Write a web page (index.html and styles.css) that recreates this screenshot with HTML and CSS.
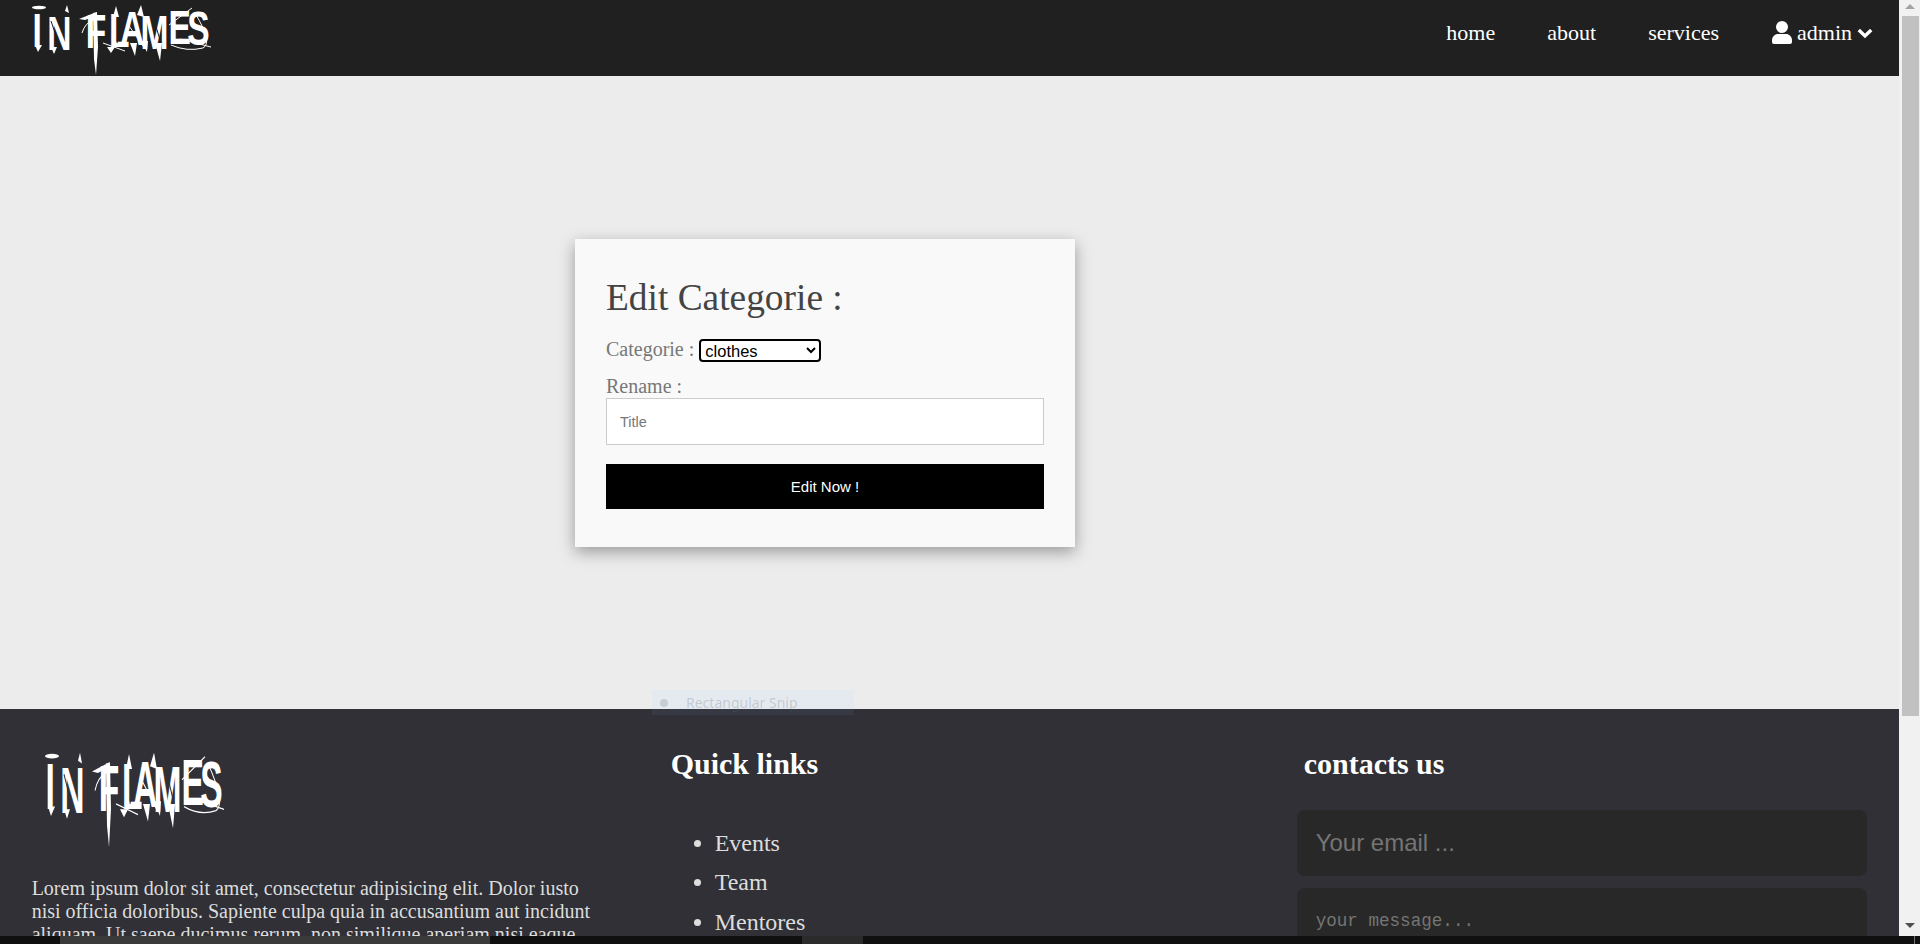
FILE: index.html
```html
<!DOCTYPE html>
<html lang="en">
<head>
<meta charset="utf-8">
<title>Edit Categorie</title>
<link rel="stylesheet" href="styles.css">
</head>
<body>
<svg class="defs" aria-hidden="true">
  <symbol id="flames" viewBox="0 -3 185 75" preserveAspectRatio="none" overflow="visible">
    <g transform="scale(0.7 1)">
      <text class="logo-text" x="8 29 58 84 117 133 162 202 229" y="44 47 46 45 44 42 46 41 42">IN FLAMES</text>
    </g>
    <g class="logo-spikes">
      <ellipse cx="12" cy="4.500" rx="7" ry="1.800"/>
      <polygon points="66,10 70,9 71,44 69,72 67,56"/>
      <polygon points="86,14 89,3 92,14"/>
      <polygon points="110,12 114,2 117,14"/>
      <polygon points="128,40 133,58 135,40"/>
      <polygon points="103,40 108,53 110,40"/>
      <polygon points="114,38 120,49 121,38"/>
      <polygon points="24,44 27,51 30,44"/>
      <polygon points="8,42 11,49 15,42"/>
      <polygon points="38,8 40,2 42,10"/>
      <polygon points="52,16 67,10 68,13 58,17"/>
      <polygon points="80,44 84,50 88,44"/>
    </g>
    <g class="logo-lines">
      <path d="M66 17 Q 58 20 55 30"/>
      <path d="M168 10 Q 186 40 176 45 Q 160 49 144 42"/>
      <path d="M142 22 L 165 5"/>
      <path d="M153 36 L 184 44"/>
      <path d="M76 40 L 98 48"/>
      <path d="M100 20 L 118 46"/>
    </g>
    <g class="logo-cuts">
      <path d="M24 18 L 30 36"/>
      <path d="M96 12 L 90 40"/>
      <path d="M126 14 L 134 40"/>
      <path d="M150 18 L 156 20"/>
      <path d="M150 32 L 157 32"/>
    </g>
  </symbol>
</svg>
<div class="window">
  <div class="page">
    <header class="topbar">
      <a class="logo-link" href="#" aria-label="In Flames"><svg class="logo logo-top"><use href="#flames"/></svg></a>
      <nav class="nav">
        <a href="#">home</a>
        <a href="#">about</a>
        <a href="#">services</a>
        <a class="user" href="#">
          <svg class="user-icon" viewBox="0 0 20 23"><circle cx="10" cy="6" r="6"/><path d="M0 19.5C0 15.5 3 13 6 13h8c3 0 6 2.500 6 6.500V21a2 2 0 0 1-2 2H2a2 2 0 0 1-2-2z"/></svg>
          <span>admin</span>
          <svg class="chev" viewBox="0 0 16 11"><path d="M1.800 2l6.200 6 6.200-6"/></svg>
        </a>
      </nav>
    </header>
    <main class="main">
      <form class="card">
        <h1>Edit Categorie :</h1>
        <div class="row">
          <label for="cat">Categorie :</label>
          <select id="cat" class="select"><option>clothes</option></select>
        </div>
        <label class="rename" for="title">Rename :</label>
        <input id="title" class="text" type="text" placeholder="Title">
        <button class="btn" type="button">Edit Now !</button>
      </form>
    </main>
    <footer class="footer">
      <section class="col">
        <svg class="logo logo-foot"><use href="#flames"/></svg>
        <p class="lorem">Lorem ipsum dolor sit amet, consectetur adipisicing elit. Dolor iusto nisi officia doloribus. Sapiente culpa quia in accusantium aut incidunt aliquam. Ut saepe ducimus rerum, non similique aperiam nisi eaque.</p>
      </section>
      <section class="col">
        <h3>Quick links</h3>
        <ul class="links">
          <li>Events</li>
          <li>Team</li>
          <li>Mentores</li>
        </ul>
      </section>
      <section class="col col-contact">
        <h3>contacts us</h3>
        <input class="dark-input" type="email" placeholder="Your email ...">
        <textarea class="dark-area" placeholder="your message..."></textarea>
      </section>
    </footer>
  </div>
  <div class="scrollbar">
    <span class="arrow arrow-up"></span>
    <span class="thumb"></span>
    <span class="arrow arrow-down"></span>
  </div>
</div>
<div class="snip"><i class="snip-dot"></i><span>Rectangular Snip</span></div>
<div class="taskbar"><i class="task task-a"></i><i class="task task-b"></i><i class="task-line"></i></div>
</body>
</html>
```
FILE: styles.css
```css
* { box-sizing: border-box; }
html, body { margin: 0; height: 944px; overflow: hidden; }
body { font-family: "Liberation Serif", "Times New Roman", serif; background: #ececec; position: relative; }
a { color: inherit; text-decoration: none; }
.defs { width: 0; height: 0; display: block; }

.window { display: flex; height: 936px; overflow: hidden; }
.page { width: 1899px; flex: none; display: flex; flex-direction: column; height: 936px; overflow: hidden; }

.topbar { --logo-bg: #202020; height: 76px; flex: none; background: #202020; display: flex; justify-content: space-between; align-items: flex-start; padding: 0 26px 0 27px; }
.logo { display: block; color: #fff; overflow: visible; }
.logo-top { width: 185px; height: 75px; }
.logo-text { font-family: "Liberation Sans", Arial, sans-serif; font-weight: 700; font-size: 48px; fill: #fff; }
.logo-spikes { fill: #fff; }
.logo-lines { fill: none; stroke: #fff; stroke-width: 1; }
.logo-cuts { fill: none; stroke: var(--logo-bg); stroke-width: 1; }
.nav { display: flex; align-items: center; gap: 52px; height: 66px; color: #fff; font-size: 22px; }
.user { display: flex; align-items: center; gap: 5px; margin-left: 1px; }
.user-icon { width: 20px; height: 23px; fill: #fff; margin-bottom: 2px; }
.chev { width: 16px; height: 11px; fill: none; stroke: #fff; stroke-width: 3.4; }

.main { height: 633px; flex: none; display: flex; align-items: center; padding-left: 575px; }
.card { width: 500px; height: 308px; background: #f9f9f9; padding: 0 31px; box-shadow: 0 5px 15px rgba(0, 0, 0, .35); display: flex; flex-direction: column; }
.card h1 { margin: 38px 0 0; font-size: 37.4px; font-weight: 400; line-height: 42px; color: #444; }
.row { display: flex; align-items: center; gap: 5px; margin-top: 20px; height: 23px; }
.row label { font-size: 20px; color: #777; line-height: 23px; margin-top: -2px; }
.rename { font-size: 20px; color: #777; line-height: 23px; }
.select { width: 122px; height: 23px; border: 2px solid #000; border-radius: 4px; background: #fff; color: #000; font-family: "Liberation Sans", Arial, sans-serif; font-size: 16.5px; padding: 0; }
.rename { margin-top: 13px; display: block; }
.text { width: 100%; height: 47px; margin-top: 0; border: 1px solid #ccc; background: #fff; padding: 1px 13px 0; font-family: "Liberation Sans", Arial, sans-serif; font-size: 14.5px; flex: none; }
.text::placeholder { color: #777; }
.btn { height: 45px; flex: none; margin-top: 19px; width: 100%; border: 0; background: #000; color: #fff; font-family: "Liberation Sans", Arial, sans-serif; font-size: 15px; padding: 0; }

.footer { --logo-bg: #303036; flex: none; height: 400px; background: #303036; display: grid; grid-template-columns: repeat(3, 633px); color: #ddd; }
.col { padding: 0 31.65px; }
.col-contact { padding: 0 32px 0 31px; }
.logo-foot { width: 185px; height: 101px; margin: 37px 0 0 8px; }
.lorem { margin: 30px 0 0; font-size: 20px; line-height: 23px; color: #ddd; }
.col h3 { margin: 37px 0 0; padding-left: 6px; font-size: 30px; font-weight: 700; line-height: 36px; color: #fff; }
.col-contact h3 { padding-left: 6.65px; }
.links { margin: 41.5px 0 0 10px; padding: 0 0 0 40px; font-size: 24px; line-height: 39.5px; color: #ddd; }
.dark-input { display: block; width: 100%; height: 66px; margin-top: 28px; border: 0; border-radius: 8px; background: #282828; padding: 0 18.65px; font-family: "Liberation Sans", Arial, sans-serif; font-size: 24px; color: #fff; }
.dark-input::placeholder { color: #757575; }
.dark-area { display: block; width: 100%; height: 120px; margin-top: 12px; border: 0; border-radius: 8px; background: #282828; padding: 23px 18.65px; font-family: "Liberation Mono", "Courier New", monospace; font-size: 17.6px; color: #fff; resize: none; }
.dark-area::placeholder { color: #757575; }

.scrollbar { width: 21px; flex: none; background: #f1f1f1; position: relative; display: flex; flex-direction: column; align-items: center; padding: 0 0 0 1px; }
.arrow { width: 0; height: 0; flex: none; border-left: 5px solid transparent; border-right: 5px solid transparent; }
.arrow-up { border-bottom: 5px solid #a3a3a3; margin: 4px 0 7px; }
.thumb { width: 17px; height: 700px; background: #c1c1c1; flex: none; }
.arrow-down { border-top: 5px solid #505050; margin-top: 207px; }

.snip { position: absolute; left: 652px; top: 690px; width: 202px; height: 25px; background: linear-gradient(rgba(200, 225, 255, .2) 19px, rgba(130, 170, 220, .08) 19px); color: rgba(90, 100, 110, .25); font-family: "Noto Sans", "Liberation Sans", sans-serif; font-size: 14px; display: flex; align-items: center; padding-left: 8px; gap: 18px; }
.snip-dot { width: 8px; height: 8px; border-radius: 50%; background: rgba(60, 80, 100, .18); flex: none; }

.taskbar { position: absolute; left: 0; top: 936px; width: 1920px; height: 8px; background: #101010; }
.task { position: absolute; top: 0; height: 8px; }
.task-a { left: 60px; width: 430px; background: #3a3a3a; }
.task-b { left: 802px; width: 61px; background: #2b2b2b; }
.task-line { position: absolute; left: 1914px; top: 0; width: 1px; height: 8px; background: #777; }
```
